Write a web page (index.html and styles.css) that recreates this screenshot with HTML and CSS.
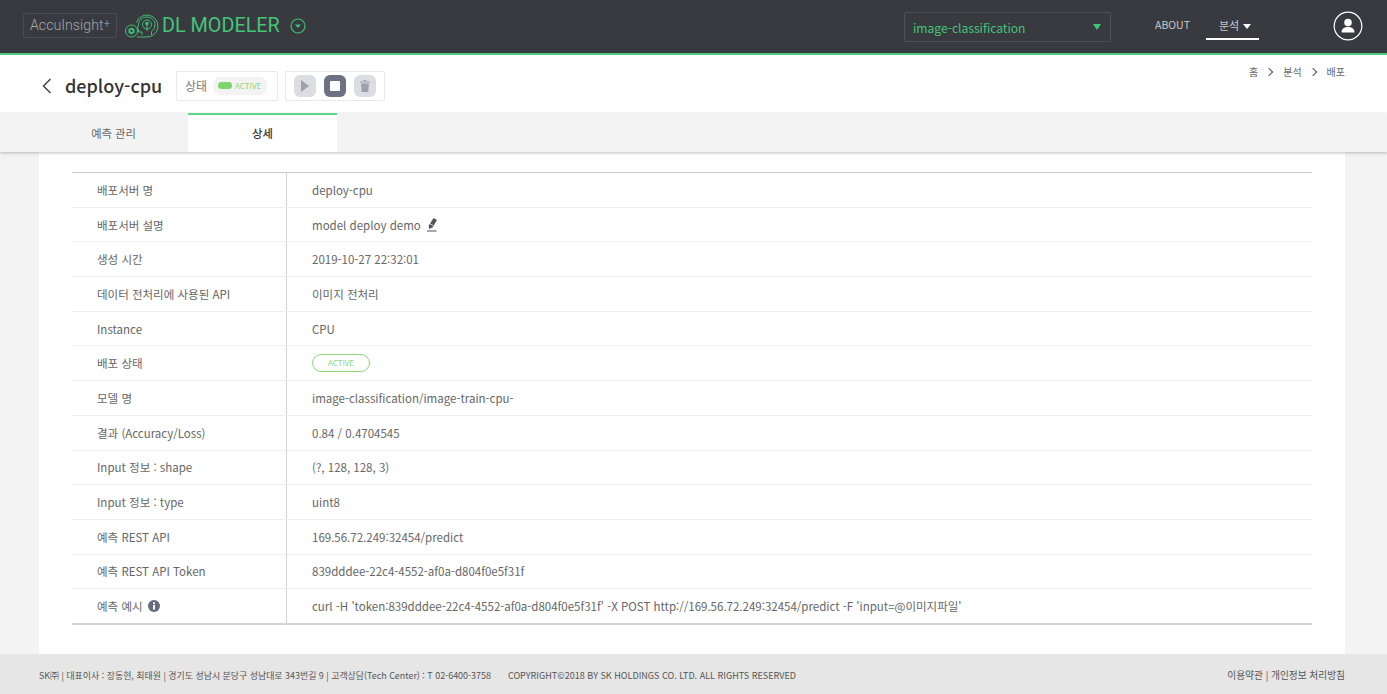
FILE: index.html
```html
<!DOCTYPE html>
<html lang="ko">
<head>
    <meta charset="UTF-8">
    <title>DL Modeler</title>
    <link rel="stylesheet" href="styles.css">
</head>
<body>
    <header class="topbar">
        <div class="brand">
            <span class="suite">AccuInsight<sup>+</sup></span>
            <svg class="logo" width="34" height="24" viewBox="0 0 34 24" fill="none" stroke="#3fbf74" stroke-width="1">
                <circle cx="6.500" cy="17" r="6"/>
                <path d="M6.500 13.500l3 1.750v3.500l-3 1.750-3-1.750v-3.500z" fill="#3fbf74" stroke="none"/>
                <circle cx="6.500" cy="17" r="1.200" fill="#383a40" stroke="none"/>
                <path d="M12 23h10a11 11 0 1 0-10.500-14.500"/>
                <path d="M17 21v-3h-3.500v-3l-1.500-1 1.500-3c0-5 4-8 8.500-8s8 3.500 8 8c0 3-1.500 5-3.500 6.500V21"/>
                <circle cx="22" cy="10.500" r="4.500"/>
                <circle cx="22" cy="9.500" r="1.800" fill="#3fbf74" stroke="none"/>
                <path d="M22 11v6"/>
            </svg>
            <span class="product">DL MODELER</span>
            <svg class="product-toggle" width="16" height="16" viewBox="0 0 16 16">
                <circle cx="8" cy="8" r="7" fill="none" stroke="#3fbf74" stroke-width="1.200"/>
                <path d="M5 6.500h6L8 10z" fill="#3fbf74"/>
            </svg>
        </div>
        <div class="project-select">
            <span>image-classification</span>
            <i class="caret-green"></i>
        </div>
        <nav class="topnav">
            <a class="navlink">ABOUT</a>
            <a class="navlink current">분석 <i class="caret-white"></i></a>
        </nav>
        <svg class="user" width="30" height="30" viewBox="0 0 30 30">
            <circle cx="15" cy="15" r="13.800" fill="none" stroke="#fff" stroke-width="1.200"/>
            <circle cx="15" cy="11.500" r="3.800" fill="#fff"/>
            <path d="M8.500 21.500c0-4 3-5.500 6.500-5.500s6.500 1.500 6.500 5.500z" fill="#fff"/>
        </svg>
    </header>

    <section class="titlebar">
        <svg class="back" width="10" height="16" viewBox="0 0 10 16">
            <path d="M8.500 1L1.500 8l7 7" fill="none" stroke="#444" stroke-width="1.500"/>
        </svg>
        <h1>deploy-cpu</h1>
        <div class="statusbox">
            <span class="statuslabel">상태</span>
            <span class="statuspill"><i class="led"></i>ACTIVE</span>
        </div>
        <div class="actions">
            <button class="action">
                <svg width="10" height="12" viewBox="0 0 10 12"><path d="M1 0l8 6-8 6z" fill="#9ea2ae"/></svg>
            </button>
            <button class="action on">
                <svg width="10" height="10" viewBox="0 0 10 10"><rect width="10" height="10" rx="1" fill="#fff"/></svg>
            </button>
            <button class="action">
                <svg width="10" height="12" viewBox="0 0 10 12"><path d="M0 1.500h10v1H0zM1 3.500h8l-.7 8.500H1.700zM3.500 0h3v1h-3z" fill="#9ea2ae"/></svg>
            </button>
        </div>
        <ol class="crumbs">
            <li>홈</li>
            <li>분석</li>
            <li>배포</li>
        </ol>
    </section>

    <div class="tabs">
        <a class="tab">예측 관리</a>
        <a class="tab selected">상세</a>
    </div>

    <main class="page">
        <div class="panel">
            <div class="details">
                <div class="row"><div class="label">배포서버 명</div><div class="value">deploy-cpu</div></div>
                <div class="row"><div class="label">배포서버 설명</div><div class="value">model deploy demo
                    <svg class="edit" width="10" height="14" viewBox="0 0 10 14"><path d="M6.500 0l3.500 2-4.500 7.500-3.500 1.500-.2-3.500z" fill="#555"/><path d="M2.500 5.500l3.500 2" stroke="#fff" stroke-width=".8"/><path d="M0 13h9.500" stroke="#555" stroke-width="1"/></svg>
                </div></div>
                <div class="row"><div class="label">생성 시간</div><div class="value">2019-10-27 22:32:01</div></div>
                <div class="row"><div class="label">데이터 전처리에 사용된 API</div><div class="value">이미지 전처리</div></div>
                <div class="row"><div class="label">Instance</div><div class="value">CPU</div></div>
                <div class="row"><div class="label">배포 상태</div><div class="value"><span class="badge">ACTIVE</span></div></div>
                <div class="row"><div class="label">모델 명</div><div class="value">image-classification/image-train-cpu-</div></div>
                <div class="row"><div class="label">결과 (Accuracy/Loss)</div><div class="value">0.84 / 0.4704545</div></div>
                <div class="row"><div class="label">Input 정보 : shape</div><div class="value">(?, 128, 128, 3)</div></div>
                <div class="row"><div class="label">Input 정보 : type</div><div class="value">uint8</div></div>
                <div class="row"><div class="label">예측 REST API</div><div class="value">169.56.72.249:32454/predict</div></div>
                <div class="row"><div class="label">예측 REST API Token</div><div class="value">839dddee-22c4-4552-af0a-d804f0e5f31f</div></div>
                <div class="row"><div class="label">예측 예시
                    <svg class="info" width="12" height="12" viewBox="0 0 12 12"><circle cx="6" cy="6" r="6" fill="#666c80"/><rect x="5" y="5" width="2" height="4.500" fill="#fff"/><rect x="5" y="2.300" width="2" height="1.800" fill="#fff"/></svg>
                </div><div class="value">curl -H 'token:839dddee-22c4-4552-af0a-d804f0e5f31f' -X POST http://169.56.72.249:32454/predict -F 'input=@이미지파일'</div></div>
            </div>
        </div>
    </main>

    <footer class="footer">
        <span class="company">SK㈜ | 대표이사 : 장동현, 최태원 | 경기도 성남시 분당구 성남대로 343번길 9 | 고객상담(Tech Center) : T 02-6400-3758</span>
        <span class="copyright">COPYRIGHT©2018 BY SK HOLDINGS CO. LTD. ALL RIGHTS RESERVED</span>
        <span class="terms">이용약관 | 개인정보 처리방침</span>
    </footer>
</body>
</html>
```

FILE: styles.css
```css
* {
    box-sizing: border-box;
}

html, body {
    margin: 0;
    height: 100%;
}

body {
    display: flex;
    flex-direction: column;
    height: 694px;
    overflow: hidden;
    background-color: #f3f3f3;
    color: #666;
    font-family: "Noto Sans CJK KR", "Noto Sans", sans-serif;
    font-size: 11.500px;
}

/* top bar */
.topbar {
    display: flex;
    align-items: center;
    flex: none;
    height: 55px;
    padding: 0 24px 2px 23px;
    background-color: #383a40;
    border-bottom: 2px solid #4ccb7f;
}

.brand {
    display: flex;
    align-items: center;
    width: 881px;
}

.suite {
    width: 94px;
    height: 25px;
    padding: 0 0 0 6px;
    border: 1px solid #4a4c53;
    border-radius: 2px;
    color: #a5a6aa;
    font-family: "Roboto", sans-serif;
    font-size: 14.200px;
    font-weight: 300;
    line-height: 23px;
    white-space: nowrap;
}

.suite sup {
    font-size: 12px;
    line-height: 0;
    vertical-align: 2px;
}

.logo {
    margin-left: 8px;
}

.product {
    margin-left: 3px;
    color: #43c578;
    font-family: "Roboto", sans-serif;
    font-size: 19.800px;
    line-height: 26px;
}

.product-toggle {
    margin-left: 10px;
}

.project-select {
    display: flex;
    align-items: center;
    justify-content: space-between;
    width: 207px;
    height: 30px;
    margin-top: 2px;
    padding: 1px 9px 0 8px;
    border: 1px solid #4d5058;
    border-radius: 2px;
    color: #43c578;
    font-size: 12.100px;
}

.caret-green {
    border-top: 6px solid #43c578;
    border-left: 4px solid transparent;
    border-right: 4px solid transparent;
}

.topnav {
    display: flex;
    margin-left: 44px;
}

.navlink {
    color: #c8c9cb;
    font-size: 10.500px;
    height: 26px;
    line-height: 26px;
}

.navlink.current {
    width: 53px;
    margin-left: 16px;
    padding-left: 13px;
    border-bottom: 2px solid #fff;
    height: 28px;
    font-size: 11px;
}

.caret-white {
    display: inline-block;
    margin-left: 1px;
    vertical-align: 1px;
    border-top: 5px solid #fff;
    border-left: 4px solid transparent;
    border-right: 4px solid transparent;
}

.user {
    margin-left: auto;
}

/* title row */
.titlebar {
    display: flex;
    align-items: center;
    flex: none;
    height: 58px;
    padding: 3px 42px 0 42px;
    background-color: #fff;
}

.back {
    flex: none;
}

h1 {
    margin: 0 0 2px 13px;
    width: 111px;
    color: #333;
    font-size: 18px;
    font-weight: 500;
    line-height: 28px;
    white-space: nowrap;
}

.statusbox {
    display: flex;
    align-items: center;
    width: 102px;
    height: 30px;
    padding-left: 8px;
    border: 1px solid #e9e9e9;
    border-radius: 2px;
}

.statuslabel {
    color: #777;
    font-size: 12px;
}

.statuspill {
    display: flex;
    align-items: center;
    height: 18px;
    margin-left: 6px;
    padding: 0 6px 0 5px;
    border-radius: 8px;
    background-color: #f3f3f3;
    color: #8fd67a;
    font-size: 8px;
}

.led {
    width: 14px;
    height: 7px;
    margin-right: 3px;
    border-radius: 4px;
    background-color: #7dd66b;
}

.actions {
    display: flex;
    align-items: center;
    gap: 8px;
    width: 100px;
    height: 30px;
    margin-left: 7px;
    padding-left: 8px;
    border: 1px solid #e9e9e9;
    border-radius: 2px;
}

.action {
    display: flex;
    align-items: center;
    justify-content: center;
    width: 22px;
    height: 22px;
    padding: 0;
    border: 0;
    border-radius: 6px;
    background-color: #dcdde2;
}

.action.on {
    background-color: #6d7183;
}

.crumbs {
    display: flex;
    align-self: flex-start;
    margin: 6px 0 0 auto;
    padding: 0;
    list-style: none;
    color: #666;
    font-size: 10px;
    line-height: 15px;
}

.crumbs li + li::before {
    content: "";
    display: inline-block;
    width: 5px;
    height: 5px;
    margin: 0 11px 1px 8px;
    border-top: 1px solid #555;
    border-right: 1px solid #555;
    transform: rotate(45deg);
}

/* tabs */
.tabs {
    display: flex;
    position: relative;
    flex: none;
    height: 39px;
    padding-left: 39px;
    background-color: #f3f3f3;
    box-shadow: 0 1px 3px rgba(0, 0, 0, 0.25);
}

.tab {
    width: 149px;
    text-align: center;
    color: #666;
    font-size: 11.300px;
    line-height: 40px;
}

.tab.selected {
    border-top: 2px solid #5dd68d;
    background-color: #fff;
    color: #333;
    font-weight: 500;
    line-height: 37px;
}

/* detail table */
.page {
    flex: 1;
    padding: 0 42px 0 39px;
}

.panel {
    height: 100%;
    padding: 20px 33px 0;
    background-color: #fff;
}

.details {
    border-top: 1px solid #c8c8c8;
    border-bottom: 2px solid #d4d4d4;
}

.row {
    display: flex;
    height: 34.700px;
    border-bottom: 1px solid #eee;
}

.row:last-child {
    height: 34px;
    border-bottom: 0;
}

.label {
    display: flex;
    align-items: center;
    flex: none;
    width: 215px;
    padding-left: 25px;
    border-right: 1px solid #d4d4d4;
    color: #666;
    font-size: 11.500px;
}

.value {
    display: flex;
    align-items: center;
    padding-left: 25px;
    color: #666;
    font-size: 11.500px;
}

.edit {
    margin-left: 6px;
}

.info {
    margin-left: 5px;
}

.badge {
    width: 58px;
    height: 18px;
    border: 1px solid #8fd67a;
    border-radius: 9px;
    color: #8fd67a;
    font-size: 8px;
    line-height: 16px;
    text-align: center;
}

/* footer */
.footer {
    display: flex;
    flex: none;
    align-items: center;
    height: 40px;
    padding: 2px 42px 0 39px;
    background-color: #e6e6e6;
    color: #555;
    font-size: 8.930px;
}

.copyright {
    margin-left: 17px;
    font-size: 9.050px;
}

.terms {
    margin-left: auto;
    font-size: 9.700px;
}
```
